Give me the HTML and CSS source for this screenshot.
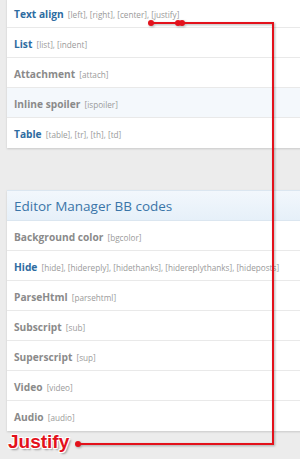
FILE: index.html
```html
<!DOCTYPE html>
<html lang="en">
<head>
    <meta charset="UTF-8">
    <meta name="viewport" content="width=device-width, initial-scale=1.0">
    <title>BB codes</title>
    <link rel="stylesheet" href="styles.css">
</head>
<body>
    <div class="page">
        <!-- Core BB codes (continued) -->
        <div class="panel panel-top">
            <div class="row"><span class="title active">Text align</span> <span class="tags">[left], [right], [center], [justify]</span></div>
            <div class="row"><span class="title active">List</span> <span class="tags">[list], [indent]</span></div>
            <div class="row"><span class="title">Attachment</span> <span class="tags">[attach]</span></div>
            <div class="row row-hover"><span class="title">Inline spoiler</span> <span class="tags">[ispoiler]</span></div>
            <div class="row"><span class="title active">Table</span> <span class="tags">[table], [tr], [th], [td]</span></div>
        </div>

        <!-- Editor Manager -->
        <div class="panel panel-bottom">
            <div class="panel-head">Editor Manager BB codes</div>
            <div class="row"><span class="title">Background color</span> <span class="tags">[bgcolor]</span></div>
            <div class="row"><span class="title active">Hide</span> <span class="tags">[hide], [hidereply], [hidethanks], [hidereplythanks], [hideposts]</span></div>
            <div class="row"><span class="title">ParseHtml</span> <span class="tags">[parsehtml]</span></div>
            <div class="row"><span class="title">Subscript</span> <span class="tags">[sub]</span></div>
            <div class="row"><span class="title">Superscript</span> <span class="tags">[sup]</span></div>
            <div class="row"><span class="title">Video</span> <span class="tags">[video]</span></div>
            <div class="row"><span class="title">Audio</span> <span class="tags">[audio]</span></div>
        </div>

        <div class="note">Justify</div>

        <!-- annotation arrow -->
        <svg class="arrow" width="300" height="459" viewBox="0 0 300 459">
            <g fill="none" stroke="#e3111b" stroke-width="2" stroke-linejoin="miter">
                <polyline points="151,23 273,23 273,444 78,444" />
            </g>
            <g fill="#e3111b">
                <circle cx="151" cy="23" r="3" />
                <circle cx="178" cy="23" r="3" />
                <circle cx="182" cy="23" r="3" />
                <circle cx="78" cy="444" r="3" />
            </g>
        </svg>
    </div>
</body>
</html>
```

FILE: styles.css
```css
body {
    margin: 0;
    background-color: #ececec;
    font-family: "Open Sans", "Noto Sans", Arial, sans-serif;
    overflow: hidden;
}

.page {
    position: relative;
    width: 300px;
    height: 459px;
    overflow: hidden;
}

.panel {
    margin-left: 7px;
    width: 320px;
    background-color: #fff;
    box-shadow: 0 1px 2px rgba(0, 0, 0, 0.15);
}

.panel-top {
    margin-top: -2px;
}

.panel-bottom {
    margin-top: 43px;
}

.panel-head {
    height: 29px;
    line-height: 30px;
    padding-left: 7px;
    font-size: 13.5px;
    color: #3a75a8;
    background: linear-gradient(#f2f7fc, #e6f0f9);
    border-top: 1px solid #dbe6f0;
    border-bottom: 1px solid #dbe6f0;
    margin-top: -1px;
}

.row {
    height: 29px;
    line-height: 29px;
    padding-left: 7px;
    border-bottom: 1px solid #e9e9e9;
    white-space: nowrap;
    overflow: hidden;
}

.row:last-child {
    border-bottom: none;
    height: 30px;
}

.row-hover {
    background-color: #f4f8fc;
}

.title {
    font-size: 10.2px;
    font-weight: bold;
    color: #8a8a8a;
}

.title.active {
    color: #2e6ca1;
}

.tags {
    font-size: 8.2px;
    color: #9a9a9a;
}

.note {
    margin: 0 0 0 8px;
    font-family: "Liberation Sans", Arial, sans-serif;
    font-weight: bold;
    font-size: 19px;
    color: #e3111b;
    text-shadow: -1px -1px 0 #fff, 1px -1px 0 #fff, -1px 1px 0 #fff, 1px 1px 0 #fff,
        2px 2px 2px rgba(0, 0, 0, 0.35);
}

.arrow {
    position: absolute;
    left: 0;
    top: 0;
    filter: drop-shadow(1px 1px 1px rgba(0, 0, 0, 0.3));
}
```
